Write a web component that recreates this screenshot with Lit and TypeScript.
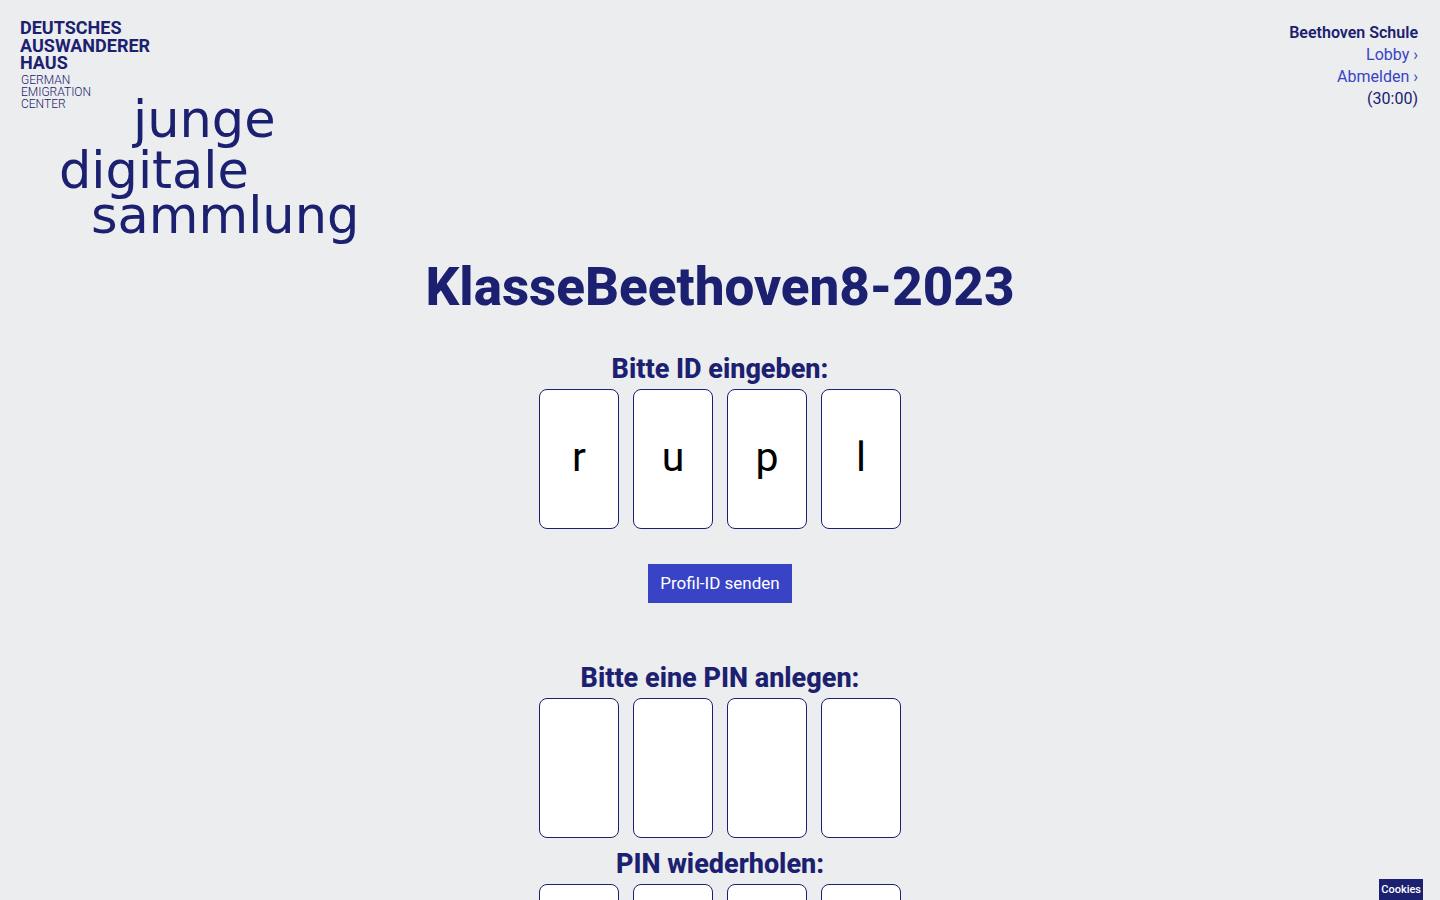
import { LitElement, html, css } from "lit";
import { customElement, property } from "lit/decorators.js";

@customElement("code-field")
class CodeField extends LitElement {
  @property() label = "";
  @property() value = "";

  static styles = css`
    :host {
      display: block;
    }
    .group {
      margin: 0;
      padding: 0;
      border: 0;
      min-width: 0;
    }
    .legend {
      width: 100%;
      padding: 0;
      text-align: center;
      font-size: 27px;
      font-weight: 800;
      line-height: 40px;
    }
    .cells {
      display: flex;
      justify-content: center;
      gap: 14px;
    }
    .cell {
      box-sizing: border-box;
      width: 80px;
      height: 140px;
      margin: 0;
      padding: 0 0 4px;
      border: 1px solid #1c2070;
      border-radius: 8px;
      background: #fff;
      color: #000;
      font-family: Roboto, sans-serif;
      font-size: 41px;
      text-align: center;
    }
  `;

  render() {
    return html`<fieldset class="group">
      <legend class="legend">${this.label}</legend>
      <div class="cells">
        ${[0, 1, 2, 3].map(
          (i) => html`<input
            class="cell"
            type="text"
            maxlength="1"
            aria-label=${`${this.label} ${i + 1}`}
            .value=${this.value[i] ?? ""}
          />`
        )}
      </div>
    </fieldset>`;
  }
}

@customElement("app-root")
class AppRoot extends LitElement {
  static styles = css`
    :host {
      display: block;
      box-sizing: border-box;
      min-height: 100vh;
      background: #ebedee;
      color: #1c2070;
      font-family: Roboto, sans-serif;
      padding-bottom: 40px;
    }
    .header {
      display: flex;
      justify-content: space-between;
      align-items: flex-start;
    }
    .logo {
      display: block;
      width: 380px;
      height: 255px;
      fill: #1c2070;
    }
    .house {
      font: 700 18px Roboto, sans-serif;
    }
    .center {
      font: 300 12px Roboto, sans-serif;
    }
    .script {
      font: 400 51px "DejaVu Sans", sans-serif;
    }
    .account {
      display: flex;
      flex-direction: column;
      padding: 22px 22px 0 0;
      text-align: right;
      font-size: 16px;
      line-height: 22px;
    }
    .name {
      font-weight: 600;
    }
    .link {
      color: #3943c6;
      text-decoration: none;
    }
    .main {
      display: flex;
      flex-direction: column;
      align-items: center;
    }
    .title {
      margin: 0 0 30px;
      font-size: 53px;
      font-weight: 800;
      line-height: 64px;
    }
    .send {
      margin: 35px 0 55px;
      padding: 0 12px 2px;
      height: 39px;
      border: 0;
      background: #3943c6;
      color: #fff;
      font: 400 17px Roboto, sans-serif;
    }
    .repeat {
      margin-top: 6px;
    }
    .cookies {
      position: fixed;
      right: 17px;
      bottom: 0;
      height: 21px;
      padding: 0 2px;
      border: 0;
      background: #1c2070;
      color: #fff;
      font: 500 11px Roboto, sans-serif;
    }
  `;

  render() {
    return html`
      <header class="header">
        <svg class="logo" viewBox="0 0 380 255" role="img" aria-label="Deutsches Auswandererhaus – junge digitale sammlung">
          <g class="house">
            <text x="20" y="34">DEUTSCHES</text>
            <text x="20" y="52">AUSWANDERER</text>
            <text x="20" y="69">HAUS</text>
          </g>
          <g class="center">
            <text x="21" y="84">GERMAN</text>
            <text x="21" y="96">EMIGRATION</text>
            <text x="21" y="108">CENTER</text>
          </g>
          <g class="script">
            <text x="133" y="137">junge</text>
            <text x="59" y="188">digitale</text>
            <text x="91" y="233">sammlung</text>
          </g>
        </svg>
        <nav class="account">
          <span class="name">Beethoven Schule</span>
          <a class="link" href="#lobby">Lobby ›</a>
          <a class="link" href="#abmelden">Abmelden ›</a>
          <span>(30:00)</span>
        </nav>
      </header>
      <main class="main">
        <h1 class="title">KlasseBeethoven8-2023</h1>
        <code-field label="Bitte ID eingeben:" value="rupl"></code-field>
        <button class="send" type="button">Profil-ID senden</button>
        <code-field label="Bitte eine PIN anlegen:"></code-field>
        <code-field class="repeat" label="PIN wiederholen:"></code-field>
      </main>
      <button class="cookies" type="button">Cookies</button>
    `;
  }
}
